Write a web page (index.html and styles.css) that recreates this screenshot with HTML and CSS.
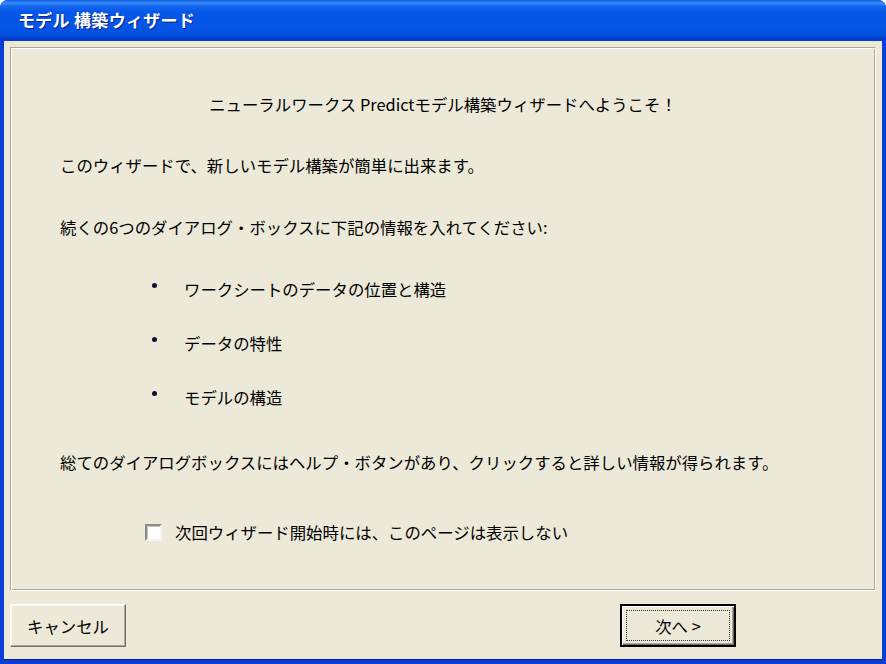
FILE: index.html
```html
<!DOCTYPE html>
<html lang="ja">
<head>
<meta charset="utf-8">
<title>モデル構築ウィザード</title>
<link rel="stylesheet" href="styles.css">
</head>
<body>
<div class="window">
  <div class="titlebar"><span class="title">モデル 構築ウィザード</span></div>
  <div class="client">
    <div class="panel">
      <p class="heading">ニューラルワークス Predictモデル構築ウィザードへようこそ！</p>
      <p class="line l2">このウィザードで、新しいモデル構築が簡単に出来ます。</p>
      <p class="line l3">続くの6つのダイアログ・ボックスに下記の情報を入れてください:</p>
      <ul class="bullets">
        <li class="item"><span class="dot"></span><span>ワークシートのデータの位置と構造</span></li>
        <li class="item"><span class="dot"></span><span>データの特性</span></li>
        <li class="item"><span class="dot"></span><span>モデルの構造</span></li>
      </ul>
      <p class="line l4">総てのダイアログボックスにはヘルプ・ボタンがあり、クリックすると詳しい情報が得られます。</p>
      <label class="check"><span class="box"></span><span>次回ウィザード開始時には、このページは表示しない</span></label>
    </div>
    <div class="buttons">
      <button class="btn">キャンセル</button>
      <button class="btn default"><span class="focus">次へ &gt;</span></button>
    </div>
  </div>
</div>
</body>
</html>
```
FILE: styles.css
```css
html, body {
  margin: 0;
  padding: 0;
  background: #ffffff;
}
body {
  font-family: "Noto Sans CJK JP", "Noto Sans", sans-serif;
  font-size: 16.4px;
  color: #000;
}
.window {
  width: 886px;
  height: 664px;
  display: flex;
  flex-direction: column;
  box-sizing: border-box;
  background: #0a3ed6;
  border-radius: 8px 8px 0 0;
  overflow: hidden;
}
.titlebar {
  height: 41px;
  flex: none;
  display: flex;
  align-items: center;
  padding-left: 18px;
  box-sizing: border-box;
  background: linear-gradient(to bottom, #0a5ae6 0px, #3d8ef8 3px, #1468f0 6px, #0657e8 12px, #0455e6 28px, #0350df 35px, #003ccc 39px, #0a3ed6 41px);
}
.title {
  color: #fff;
  font-weight: bold;
  font-size: 17px;
  letter-spacing: 0.3px;
  text-shadow: 1px 1px 0 #0a1f8a;
  padding-bottom: 2px;
}
.client {
  flex: 1;
  margin: 0 4px 5px 4px;
  background: #ece9d8;
  padding: 6px 6px 0 6px;
  display: flex;
  flex-direction: column;
  box-shadow: 0 1px 0 #001ea0;
}
.panel {
  height: 544px;
  box-sizing: border-box;
  border: 1px solid;
  border-color: #aca899 #ffffff #ffffff #aca899;
  box-shadow: inset 1px 1px 0 #ffffff, inset -1px -1px 0 #aca899;
  padding: 46px 0 0 49px;
}
.panel p, .panel ul {
  margin: 0;
  padding: 0;
  line-height: 20px;
}
.heading {
  text-align: center;
  margin-left: -49px !important;
}
.l2 { margin-top: 41px !important; }
.l3 { margin-top: 42px !important; }
.bullets {
  list-style: none;
  margin-top: 42px !important;
  display: flex;
  flex-direction: column;
  gap: 34px;
}
.item {
  display: flex;
  align-items: center;
  line-height: 20px;
}
.dot {
  width: 5px;
  height: 5px;
  border-radius: 50%;
  background: #101030;
  margin-left: 92px;
  margin-right: 27px;
  position: relative;
  top: -4px;
}
.l4 { margin-top: 45px !important; }
.check {
  display: flex;
  align-items: center;
  margin-top: 50px;
  margin-left: 85px;
  line-height: 20px;
}
.box {
  width: 17px;
  height: 17px;
  box-sizing: border-box;
  background: #fff;
  border: 2px solid;
  border-color: #8a8a86 #f4f3ee #f4f3ee #8a8a86;
  box-shadow: inset 1px 1px 0 #c8c6bc;
  margin-right: 13px;
}
.buttons {
  display: flex;
  justify-content: space-between;
  margin-top: 13px;
  padding-right: 140px;
}
.btn {
  width: 116px;
  height: 43px;
  box-sizing: border-box;
  font-family: "Noto Sans CJK JP", "Noto Sans", sans-serif;
  font-size: 16.4px;
  color: #000;
  background: #ece9d8;
  border: 1px solid;
  border-color: #ffffff #716f64 #716f64 #ffffff;
  box-shadow: inset -1px -1px 0 #aca899, inset 1px 1px 0 #f8f7f2;
  padding: 0;
  display: flex;
  align-items: center;
  justify-content: center;
}
.btn.default {
  border: 2px solid #000;
  box-shadow: inset 1px 1px 0 #ffffff, inset -1px -1px 0 #716f64, inset -2px -2px 0 #aca899;
  padding: 4px;
}
.focus {
  flex: 1;
  align-self: stretch;
  display: flex;
  align-items: center;
  justify-content: center;
  border: 1px dotted #333;
}
```
